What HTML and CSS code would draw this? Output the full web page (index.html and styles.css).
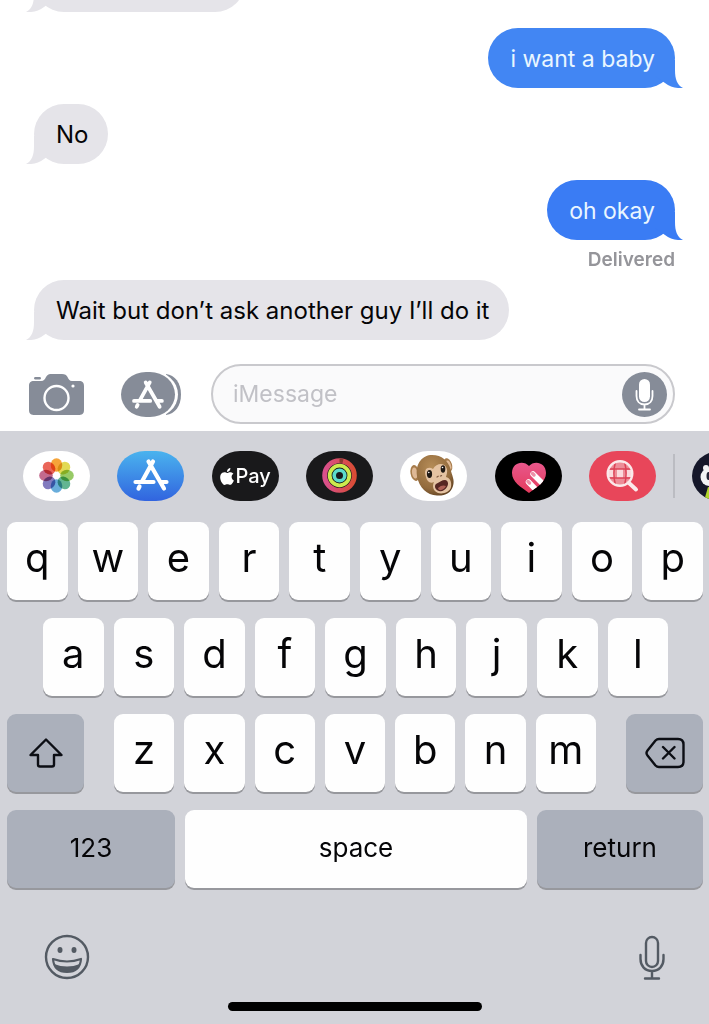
FILE: index.html
```html
<!DOCTYPE html>
<html lang="en">
<head>
<meta charset="utf-8">
<meta name="viewport" content="width=device-width, initial-scale=1">
<title>Messages</title>
<link rel="stylesheet" href="styles.css">
</head>
<body>
<svg class="defs" aria-hidden="true">
  <symbol id="tail" viewBox="0 0 28 28"><path d="M8 0V10C8 19 6 25 0 28C7 28.500 13 27 18 23L28 16V0Z"/></symbol>
  <symbol id="store" viewBox="0 0 67 50">
    <g fill="none" stroke="currentColor" stroke-width="4.200" stroke-linecap="round">
      <path d="M36 10.500L25 30.500M18.500 31H36.500M44.500 31H49.500M22.500 35.500L21.500 37.500M31.500 10.500L47 37.500"/>
    </g>
  </symbol>
</svg>

<main class="thread">
  <div class="bubble bubble-in bubble-prior"><svg class="tail"><use href="#tail"/></svg></div>
  <div class="bubble bubble-out">i want a baby<svg class="tail"><use href="#tail"/></svg></div>
  <div class="bubble bubble-in">No<svg class="tail"><use href="#tail"/></svg></div>
  <div class="sent">
    <div class="bubble bubble-out bubble-deep">oh okay<svg class="tail"><use href="#tail"/></svg></div>
    <div class="status">Delivered</div>
  </div>
  <div class="bubble bubble-in">Wait but don’t ask another guy I’ll do it<svg class="tail"><use href="#tail"/></svg></div>
</main>

<form class="composer">
  <button class="icon-btn camera" type="button" aria-label="Camera">
    <svg width="55" height="43" viewBox="0 0 55 43"><path fill="#868c98" d="M5 8H12C15 8 16 6 17 4C18.500 1.500 20 1 23 1H33C36 1 37.500 2 38.500 4C39.500 6 40.500 8 43 8H50C53.500 8 55 9.500 55 13V37C55 41 53 42 49 42H6C2 42 0 41 0 37V13C0 9.500 1.500 8 5 8ZM6.500 4H10.500C12.500 4 12.500 6.500 10.500 6.500H6.500C4.500 6.500 4.500 4 6.500 4Z"/><circle cx="27.500" cy="25" r="12" fill="none" stroke="#fff" stroke-width="2.400"/><circle cx="44" cy="13" r="1.600" fill="#fff"/></svg>
  </button>
  <button class="icon-btn apps" type="button" aria-label="Apps">
    <svg width="60" height="45" viewBox="0 0 60 45"><path fill="#868c98" d="M45 2C54 3 60 11 60 22.500S54 42 45 43Z"/><rect x="-2" y="-1" width="59" height="47" rx="26" ry="23.500" fill="#fff"/><rect width="54" height="45" rx="25" ry="22.500" fill="#868c98"/><svg x="-4" y="1" width="61" height="45" viewBox="0 0 67 50" color="#fff"><use href="#store"/></svg></svg>
  </button>
  <div class="field">
    <input class="field-input" type="text" placeholder="iMessage" aria-label="iMessage">
    <button class="icon-btn" type="button" aria-label="Record audio">
      <svg width="45" height="45" viewBox="0 0 45 45"><circle cx="22.500" cy="22.500" r="22.500" fill="#868c98"/><rect x="17" y="7" width="11" height="23" rx="5.500" fill="#fff"/><path d="M14.500 19V24C14.500 29 17.500 32.500 22.500 32.500S30.500 29 30.500 24V19M22.500 32.500V37M17 37.500H28" fill="none" stroke="#fff" stroke-width="1.800" stroke-linecap="round"/></svg>
    </button>
  </div>
</form>

<section class="keyboard" aria-label="Keyboard">
  <nav class="strip" aria-label="iMessage apps">
    <div class="strip-apps">
      <button class="pill pill-white" aria-label="Photos">
        <svg width="67" height="50" viewBox="0 0 67 50"><g class="petals" transform="translate(33.500 24.500)">
          <ellipse cy="-10.500" rx="5.800" ry="6.800" fill="#f59a23"/>
          <ellipse cy="-10.500" rx="5.800" ry="6.800" fill="#dfd640" transform="rotate(45)"/>
          <ellipse cy="-10.500" rx="5.800" ry="6.800" fill="#8cc455" transform="rotate(90)"/>
          <ellipse cy="-10.500" rx="5.800" ry="6.800" fill="#51ad86" transform="rotate(135)"/>
          <ellipse cy="-10.500" rx="5.800" ry="6.800" fill="#58a4d7" transform="rotate(180)"/>
          <ellipse cy="-10.500" rx="5.800" ry="6.800" fill="#746db8" transform="rotate(225)"/>
          <ellipse cy="-10.500" rx="5.800" ry="6.800" fill="#bd5a82" transform="rotate(270)"/>
          <ellipse cy="-10.500" rx="5.800" ry="6.800" fill="#e85548" transform="rotate(315)"/>
        </g><circle cx="33.500" cy="24.500" r="1.300" fill="#fff"/></svg>
      </button>
      <button class="pill pill-store" aria-label="App Store"><svg width="67" height="50"><use href="#store"/></svg></button>
      <button class="pill pill-dark pill-pay" aria-label="Apple Pay">
        <svg width="14" height="17" viewBox="2 0 20 24"><path fill="#fff" d="M12.152 6.896c-.948 0-2.415-1.078-3.960-1.040-2.040.027-3.910 1.183-4.961 3.014-2.117 3.675-.546 9.103 1.519 12.090 1.013 1.454 2.208 3.090 3.792 3.039 1.520-.065 2.090-.987 3.935-.987 1.831 0 2.350.987 3.960.948 1.637-.026 2.676-1.480 3.676-2.948 1.156-1.688 1.636-3.325 1.662-3.415-.039-.013-3.182-1.221-3.220-4.857-.026-3.040 2.480-4.494 2.597-4.559-1.429-2.090-3.623-2.324-4.390-2.376-2-.156-3.675 1.090-4.610 1.090zM15.530 3.830c.843-1.012 1.400-2.427 1.245-3.830-1.207.052-2.662.805-3.532 1.818-.780.896-1.454 2.338-1.273 3.714 1.338.104 2.715-.688 3.559-1.701"/></svg>
        <span>Pay</span>
      </button>
      <button class="pill pill-dark" aria-label="Activity">
        <svg width="67" height="50" viewBox="0 0 67 50"><defs><linearGradient id="ring"><stop offset="0" stop-color="#d9508c"/><stop offset="1" stop-color="#d94c35"/></linearGradient></defs><g fill="none"><circle cx="33.500" cy="24.500" r="14.800" stroke="url(#ring)" stroke-width="5"/><path d="M33.500 9.700A14.800 14.800 0 0 1 37 10.100" stroke="#8d3a31" stroke-width="4"/><circle cx="33.500" cy="24.500" r="9.800" stroke="#cdeb4e" stroke-width="3.800"/><circle cx="33.500" cy="24.500" r="5.300" stroke="#5bdccb" stroke-width="3.600"/></g></svg>
      </button>
      <button class="pill pill-white" aria-label="Animoji">
        <svg width="67" height="50" viewBox="0 0 67 50"><defs><radialGradient id="fur" cx=".4" cy=".3" r=".75"><stop offset="0" stop-color="#b58c57"/><stop offset=".7" stop-color="#936b3d"/><stop offset="1" stop-color="#654524"/></radialGradient></defs>
          <ellipse cx="15" cy="22" rx="4.500" ry="8" fill="#a77c4b" transform="rotate(-10 15 22)"/><ellipse cx="14.800" cy="22" rx="2.800" ry="5.500" fill="#dfb996" transform="rotate(-10 15 22)"/>
          <ellipse cx="48" cy="14" rx="4" ry="7" fill="#a77c4b" transform="rotate(-18 48 14)"/><ellipse cx="48.500" cy="14.500" rx="2.300" ry="5" fill="#dfb996" transform="rotate(-18 48 14)"/>
          <path d="M17 25C15 12 23 4 32 4C42 4 48 10 50.500 18C52 25 55 29 53 35C51 42 45 45 37 44.500C27 44 19 37 17 25Z" fill="url(#fur)"/>
          <path d="M26 26C23 18 28 15 33 18C36 13 43 11 46 16C48 19 47 23 46 26C50 27 52 31 51 36C50 41 43 43.500 38 42C33 40 32 35 34 31C30 33 27 30 26 26Z" fill="#e5c3a2"/>
          <ellipse cx="29.500" cy="23" rx="2.600" ry="4" fill="#201914"/><ellipse cx="43" cy="18" rx="2.300" ry="3.700" fill="#201914"/><circle cx="28.800" cy="21.500" r=".8" fill="#fff"/><circle cx="42.500" cy="16.500" r=".8" fill="#fff"/>
          <path d="M37 26L38.200 25.300M40.500 25L41.500 24.600" stroke="#815c43" stroke-width="1.300" stroke-linecap="round"/>
          <path d="M36 33C40 31 42 29 45 29C48 29 49 33 47 36C45 39 42 41 39 40C35 39 34 35 36 33Z" fill="#572722"/><path d="M38 37C41 34 44 34 46 35C44 39 39 41 38 37Z" fill="#ae6055"/></svg>
      </button>
      <button class="pill pill-black" aria-label="Digital Touch">
        <svg width="67" height="50" viewBox="0 0 67 50"><defs><linearGradient id="heart" x2="0" y2="1"><stop offset="0" stop-color="#e8578b"/><stop offset="1" stop-color="#e53b5d"/></linearGradient><clipPath id="heart-clip"><path d="M34 15C29 9 17 11 17 22C17 31 26 36 34 42C42 36 51 31 51 22C51 11 39 9 34 15Z"/></clipPath></defs><path d="M34 15C29 9 17 11 17 22C17 31 26 36 34 42C42 36 51 31 51 22C51 11 39 9 34 15Z" fill="url(#heart)"/><g clip-path="url(#heart-clip)" stroke-linecap="round"><path d="M38 23L53 38M33.500 31L46 44" stroke="#fff" stroke-width="5.500"/><path d="M37.500 22.500L39 24M33 30.500L34.500 32" stroke="#ed91a9" stroke-width="3.500"/></g></svg>
      </button>
      <button class="pill pill-red" aria-label="Image search">
        <svg width="67" height="50" viewBox="0 0 67 50"><circle cx="31" cy="22.500" r="12" fill="#ed8d98"/><path d="M28 18H34V27H28ZM19 19H25V26H19ZM37 19H43V26H37Z" fill="#fbdadd"/><path d="M26.500 11C24.500 18 24.500 27 26.500 34M35.500 11C37.500 18 37.500 27 35.500 34M20 18H42M20 27H42" fill="none" stroke="#dc4155" stroke-width="1.500"/><circle cx="31" cy="22.500" r="12.300" fill="none" stroke="#fbe9ea" stroke-width="2.400"/><path d="M40 32L47 38.500" stroke="#fbe9ea" stroke-width="4" stroke-linecap="round"/></svg>
      </button>
    </div>
    <span class="strip-divider"></span>
    <button class="pill pill-edge" aria-label="More apps">
      <svg width="67" height="50" viewBox="0 0 67 50"><ellipse cx="17" cy="26" rx="8.500" ry="9" fill="#f2f3f5"/><circle cx="14" cy="17" r="3" fill="#f2f3f5"/><ellipse cx="16.500" cy="25" rx="2" ry="4" fill="#252638"/><path d="M12 50L16 36L30 39V50Z" fill="#b2d62c"/></svg>
    </button>
  </nav>

  <div class="keys">
    <div class="row">
      <button class="key">q</button><button class="key">w</button><button class="key">e</button><button class="key">r</button><button class="key">t</button><button class="key">y</button><button class="key">u</button><button class="key">i</button><button class="key">o</button><button class="key">p</button>
    </div>
    <div class="row row-home">
      <button class="key">a</button><button class="key">s</button><button class="key">d</button><button class="key">f</button><button class="key">g</button><button class="key">h</button><button class="key">j</button><button class="key">k</button><button class="key">l</button>
    </div>
    <div class="row row-lower">
      <button class="key key-fn key-side" aria-label="Shift"><svg width="36" height="32" viewBox="0 0 36 32"><path d="M18 2.500L33.500 18H26V27.500Q26 29.500 24 29.500H12Q10 29.500 10 27.500V18H2.500Z" fill="none" stroke="#0c0e14" stroke-width="2.400" stroke-linejoin="round"/></svg></button>
      <div class="row row-letters">
        <button class="key">z</button><button class="key">x</button><button class="key">c</button><button class="key">v</button><button class="key">b</button><button class="key">n</button><button class="key">m</button>
      </div>
      <button class="key key-fn key-side" aria-label="Delete"><svg width="40" height="32" viewBox="0 0 40 32"><path d="M14 2H33Q38.500 2 38.500 7.500V24.500Q38.500 30 33 30H14Q12 30 10.500 28.500L2.500 18.500Q0.500 16 2.500 13.500L10.500 3.500Q12 2 14 2ZM18 10L29.500 21.500M29.500 10L18 21.500" fill="none" stroke="#0c0e14" stroke-width="2.400" stroke-linejoin="round" stroke-linecap="round"/></svg></button>
    </div>
    <div class="row row-bottom">
      <button class="key key-fn key-word">123</button>
      <button class="key key-word">space</button>
      <button class="key key-fn key-word">return</button>
    </div>
  </div>

  <div class="dock">
    <button class="icon-btn" aria-label="Emoji"><svg width="46" height="46" viewBox="0 0 46 46"><circle cx="23" cy="23" r="21" fill="none" stroke="#535a63" stroke-width="2.400"/><ellipse cx="16" cy="16" rx="2.500" ry="3" fill="#535a63"/><ellipse cx="30" cy="16" rx="2.500" ry="3" fill="#535a63"/><path d="M9 25Q23 30 37 25Q36 38 23 38T9 25Z" fill="none" stroke="#535a63" stroke-width="2.200" stroke-linejoin="round"/><path d="M10 30Q23 35 36 30Q33 38 23 38T10 30Z" fill="#535a63"/></svg></button>
    <button class="icon-btn" aria-label="Dictate"><svg width="28" height="46" viewBox="0 0 28 46"><g fill="none" stroke="#535a63" stroke-width="2.400" stroke-linecap="round"><rect x="8" y="3" width="12" height="30" rx="6"/><path d="M2.500 21V25C2.500 32 7 37 14 37S25.500 32 25.500 25V21M14 37V44M7 44.500H21"/></g></svg></button>
  </div>
  <div class="home-bar"></div>
</section>
</body>
</html>
```
FILE: styles.css
```css
* { box-sizing: border-box; }

body {
  margin: 0;
  min-height: 100vh;
  display: flex;
  flex-direction: column;
  background: #fff;
  color: #050507;
  font-family: Inter, "Liberation Sans", sans-serif;
}

button {
  margin: 0;
  padding: 0;
  border: 0;
  background: none;
  color: inherit;
  font: inherit;
}

svg { display: block; }

.defs {
  position: absolute;
  width: 0;
  height: 0;
}

/* Conversation */
.thread {
  flex: 1 1 0;
  min-height: 340px;
  padding: 0 34px;
  display: flex;
  flex-direction: column;
  justify-content: flex-end;
  gap: 16px;
  overflow: hidden;
}

.bubble {
  position: relative;
  flex: none;
  align-self: flex-start;
  height: 60px;
  padding: 1px 20px 0 22px;
  border-radius: 30px;
  font-size: 24px;
  line-height: 60px;
}

.bubble-in {
  background: #e5e4e9;
  color: #050507;
}

.bubble-out {
  align-self: flex-end;
  background: #4286f3;
  color: #e9f6ff;
  font-size: 23px;
}

.bubble-deep { background: #3a7cf4; }

.bubble-prior { width: 211px; }

.tail {
  position: absolute;
  bottom: 0;
  left: -8px;
  width: 28px;
  height: 28px;
  fill: #e5e4e9;
}

.bubble-out .tail {
  left: auto;
  right: -8px;
  fill: #4286f3;
  transform: scaleX(-1);
}

.bubble-deep .tail { fill: #3a7cf4; }

.sent {
  display: flex;
  flex-direction: column;
}

.status {
  align-self: flex-end;
  height: 24px;
  padding-top: 8px;
  color: #95959a;
  font-size: 19px;
  font-weight: 600;
  line-height: 24px;
}

/* Message entry */
.composer {
  display: flex;
  align-items: center;
  padding: 24px 34px 7px 29px;
}

.icon-btn { flex: none; }
.camera { margin-right: 37px; }
.apps { margin-right: 30px; }

.field {
  flex: 1;
  min-width: 0;
  height: 60px;
  display: flex;
  align-items: center;
  padding: 0 6px 0 20px;
  border: 2px solid #c9c9cd;
  border-radius: 30px;
  background: #fafafb;
}

.field-input {
  flex: 1;
  min-width: 0;
  padding: 0;
  border: 0;
  outline: 0;
  background: none;
  color: #050507;
  font: inherit;
  font-size: 23px;
}

.field-input::placeholder {
  color: #c1c1c6;
  opacity: 1;
}

/* Keyboard */
.keyboard {
  display: flex;
  flex-direction: column;
  background: #d2d3d9;
}

.strip {
  display: flex;
  align-items: center;
  padding: 20px 0 21px 23px;
  overflow: hidden;
}

.strip-apps {
  flex: 1;
  display: flex;
  justify-content: space-between;
}

.strip-divider {
  width: 2px;
  height: 44px;
  margin: 0 17px;
  background: #bbbcc2;
}

.pill {
  flex: none;
  width: 67px;
  height: 50px;
  border-radius: 28px / 25px;
  overflow: hidden;
}

.pill-white { background: #fff; }
.pill-dark { background: #19191b; }
.pill-black { background: #000; }
.pill-red { background: #e8465a; }

.pill-store {
  background: linear-gradient(#4ab3ee, #3164df);
  color: #fff;
}

.pill-pay {
  display: flex;
  align-items: center;
  justify-content: center;
  gap: 2px;
  color: #fff;
  font-size: 20px;
  font-weight: 500;
}

.pill-edge {
  margin-right: -50px;
  background: #15172a;
}

.petals ellipse {
  mix-blend-mode: multiply;
  opacity: 0.9;
}

.keys {
  display: flex;
  flex-direction: column;
  gap: 18px;
  padding: 0 6px 0 7px;
}

.row {
  display: flex;
  gap: 10px;
}

.row-home { padding: 0 35px 0 36px; }
.row-lower { gap: 30px; }
.row-letters { flex: 1; }

.row-bottom {
  display: grid;
  grid-template-columns: 168px 1fr 166px;
}

.key {
  flex: 1 1 0;
  min-width: 0;
  height: 78px;
  padding-bottom: 6px;
  display: flex;
  align-items: center;
  justify-content: center;
  border-radius: 9px;
  background: #fefefe;
  box-shadow: 0 2px 0 #97989d;
  font-size: 40px;
  font-weight: 400;
  line-height: 48px;
}

.key-fn { background: #abb0bb; }

.key-side {
  flex: 0 0 77px;
  padding-bottom: 0;
}

.key-word {
  padding-bottom: 2px;
  font-size: 26px;
}

.dock {
  display: flex;
  align-items: center;
  justify-content: space-between;
  padding: 46px 43px 0 44px;
}

.home-bar {
  width: 254px;
  height: 9px;
  margin: 22px auto 13px;
  border-radius: 5px;
  background: #000;
}
```
